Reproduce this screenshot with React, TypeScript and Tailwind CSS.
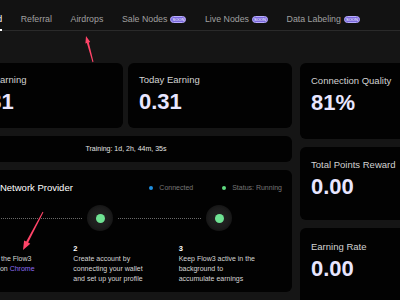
import React from "react";

function arrowPoints(x1: number, y1: number, x2: number, y2: number, w1: number, w2: number, hl: number, hw: number) {
  const dx = x2 - x1;
  const dy = y2 - y1;
  const len = Math.hypot(dx, dy);
  const ux = dx / len;
  const uy = dy / len;
  const nx = -uy;
  const ny = ux;
  const bx = x2 - ux * hl;
  const by = y2 - uy * hl;
  const pts: [number, number][] = [
    [x1 + (nx * w1) / 2, y1 + (ny * w1) / 2],
    [bx + (nx * w2) / 2, by + (ny * w2) / 2],
    [bx + (nx * hw) / 2, by + (ny * hw) / 2],
    [x2, y2],
    [bx - (nx * hw) / 2, by - (ny * hw) / 2],
    [bx - (nx * w2) / 2, by - (ny * w2) / 2],
    [x1 - (nx * w1) / 2, y1 - (ny * w1) / 2],
  ];
  return pts.map((p) => `${p[0].toFixed(2)},${p[1].toFixed(2)}`).join(" ");
}

function Badge() {
  return (
    <span className="flex h-[7px] w-[16px] items-center justify-center rounded-full border border-[#b9adff] bg-[#7a68dc] text-[4px] leading-none text-white">
      SOON
    </span>
  );
}

function Tab({ label, active, badge }: { label: string; active?: boolean; badge?: boolean }) {
  return (
    <div className="relative flex h-[30px] items-center gap-[3px] pt-[9px]">
      <span className={active ? "text-white" : "text-[#a0a0a0]"}>{label}</span>
      {badge && <Badge />}
      {active && <span className="absolute bottom-[-1px] left-0 right-0 h-[2px] bg-white" />}
    </div>
  );
}

function StatCard({ label, value, className }: { label: string; value: string; className: string }) {
  return (
    <div className={`rounded-[6px] bg-[#020202] px-[11px] ${className}`}>
      <div className="text-[9.5px] leading-[11px] text-[#d2d2d2] whitespace-nowrap">{label}</div>
      <div className="mt-[6px] text-[22px] font-bold leading-[22px] text-[#e8e6ff]">{value}</div>
    </div>
  );
}

function StepDot() {
  return (
    <div className="flex h-[26px] w-[26px] items-center justify-center rounded-full bg-[radial-gradient(circle,#262626_0%,#1c1c1c_55%,#0a0a0a_100%)]">
      <div className="h-[9px] w-[9px] rounded-full bg-[#6fe393]" />
    </div>
  );
}

function Dotted() {
  return <div className="mx-[5px] w-[83px] border-t border-dotted border-[#6a6a6a]" />;
}

export default function App() {
  return (
    <div className="relative h-[300px] w-[400px] overflow-hidden bg-[#151515] font-['Liberation_Sans',Arial,sans-serif]">
      {/* nav */}
      <div className="h-[31px] border-b border-[#2a2a2a] bg-[#121212]">
        <div className="ml-[-41px] flex gap-[18.6px] text-[8.8px] whitespace-nowrap">
          <Tab label="Dashboard" active />
          <Tab label="Referral" />
          <Tab label="Airdrops" />
          <Tab label="Sale Nodes" badge />
          <Tab label="Live Nodes" badge />
          <Tab label="Data Labeling" badge />
        </div>
      </div>

      {/* content */}
      <div className="ml-[-40px] mt-[32px] flex gap-[8px]">
        <div className="flex w-[332px] shrink-0 flex-col gap-[8px]">
          <div className="flex h-[65px] gap-[5px]">
            <StatCard label="Total Earning" value="0.31" className="w-[163px] pt-[11px]" />
            <StatCard label="Today Earning" value="0.31" className="w-[164px] pt-[11px]" />
          </div>
          <div className="flex h-[26px] items-center justify-center rounded-[6px] bg-[#020202] text-[7px] text-[#e4e4e4]">
            Training: 1d, 2h, 44m, 35s
          </div>
          <div className="h-[122px] rounded-[6px] bg-[#020202] pt-[12px]">
            <div className="flex h-[12px] items-center justify-between pl-[12px] pr-[10px]">
              <span className="text-[9.5px] leading-[12px] font-medium text-white whitespace-nowrap">
                Flow3 Network Provider
              </span>
              <div className="flex items-center gap-[29px] text-[7px] text-[#767676] whitespace-nowrap">
                <div className="flex items-center gap-[6px]">
                  <span className="h-[4px] w-[4px] rounded-full bg-[#1f8fe0]" />
                  <span>Connected</span>
                </div>
                <div className="flex items-center gap-[6px]">
                  <span className="h-[4px] w-[4px] rounded-full bg-[#5fd97f]" />
                  <span>Status: Running</span>
                </div>
              </div>
            </div>
            <div className="mt-[11px] flex items-center pl-[8px]">
              <StepDot />
              <Dotted />
              <StepDot />
              <Dotted />
              <StepDot />
            </div>
            <div className="mt-[13px] grid grid-cols-3 px-[8px] text-[7px] leading-[10px] text-[#d6d6d6] whitespace-nowrap">
              <div>
                <div className="font-bold text-white text-[7.5px]">1</div>
                <div>Download the Flow3</div>
                <div>
                  extension on <span className="text-[#8d6cf2]">Chrome</span>
                </div>
              </div>
              <div>
                <div className="font-bold text-white text-[7.5px]">2</div>
                <div>Create account by</div>
                <div>connecting your wallet</div>
                <div>and set up your profile</div>
              </div>
              <div>
                <div className="font-bold text-white text-[7.5px]">3</div>
                <div>Keep Flow3 active in the</div>
                <div>background to</div>
                <div>accumulate earnings</div>
              </div>
            </div>
          </div>
        </div>

        <div className="flex w-[170px] shrink-0 flex-col gap-[8px]">
          <StatCard label="Connection Quality" value="81%" className="h-[76px] pt-[12px]" />
          <StatCard label="Total Points Reward" value="0.00" className="h-[73px] pt-[12px]" />
          <StatCard label="Earning Rate" value="0.00" className="h-[80px] pt-[13px]" />
        </div>
      </div>

      {/* annotation arrows */}
      <svg className="pointer-events-none absolute left-0 top-0" width="400" height="300" viewBox="0 0 400 300">
        <polygon points={arrowPoints(93, 62, 86, 36, 1, 2, 7, 5)} fill="#ff4468" />
        <polygon points={arrowPoints(43, 212, 23, 250, 1, 2.2, 9, 7)} fill="#ff4468" />
      </svg>
    </div>
  );
}
